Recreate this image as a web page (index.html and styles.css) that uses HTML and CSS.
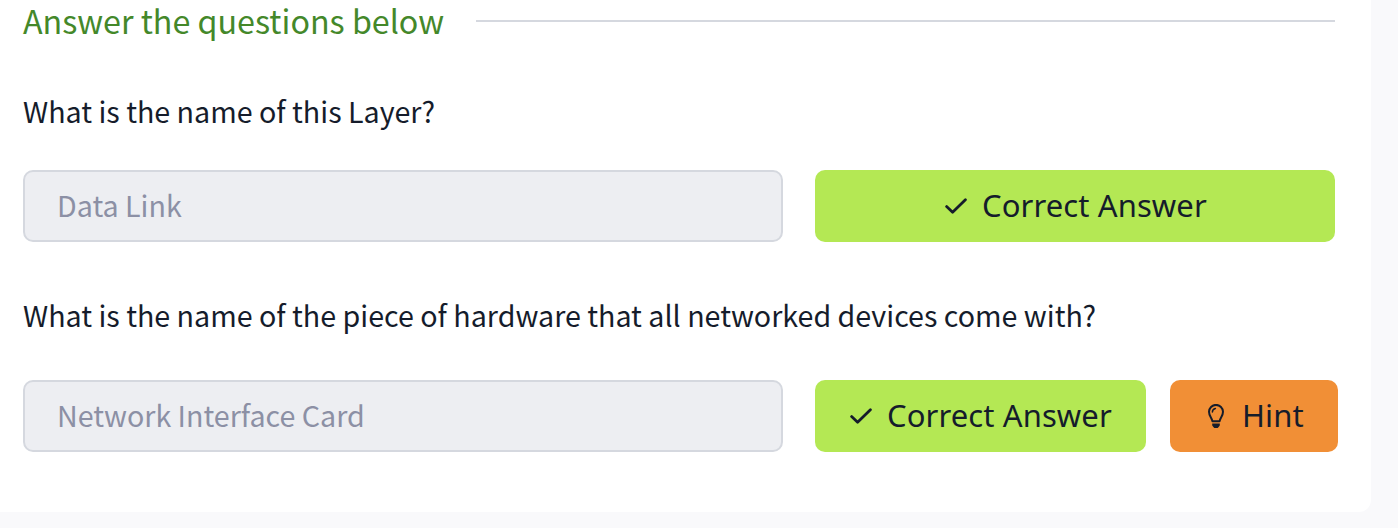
FILE: index.html
```html
<!DOCTYPE html>
<html lang="en">
<head>
<meta charset="utf-8">
<title>Questions</title>
<link rel="stylesheet" href="styles.css">
</head>
<body>
<main class="card">
  <header class="heading">
    <h2 class="title">Answer the questions below</h2>
    <span class="rule"></span>
  </header>
  <section class="task">
    <p class="question">What is the name of this Layer?</p>
    <div class="row">
      <div class="field"><span class="value">Data Link</span></div>
      <button class="btn correct wide">
        <svg class="check" viewBox="0 0 22 16"><path d="M1.6 8.6 7.6 14.2 20.4 1.8"/></svg>
        <span class="label">Correct Answer</span>
      </button>
    </div>
  </section>
  <section class="task second">
    <p class="question">What is the name of the piece of hardware that all networked devices come with?</p>
    <div class="row">
      <div class="field"><span class="value">Network Interface Card</span></div>
      <button class="btn correct narrow">
        <svg class="check" viewBox="0 0 22 16"><path d="M1.6 8.6 7.6 14.2 20.4 1.8"/></svg>
        <span class="label">Correct Answer</span>
      </button>
      <button class="btn hint">
        <svg class="bulb" viewBox="0 0 16 24"><path class="line" d="M4.4 17.2C4 14 1 12.2 1 7.8a7 6.9 0 0 1 14 0c0 4.4-3 6.2-3.4 9.4z"/><path class="line thin" d="M4.4 8Q4.4 5 7.4 4.4"/><path class="base" d="M4.2 19.4h7.6v1.7q0 .7-.6 1.2l-1 1.1q-.5.6-1.2.6H7q-.7 0-1.2-.6l-1-1.1q-.6-.5-.6-1.2z"/></svg>
        <span class="label">Hint</span>
      </button>
    </div>
  </section>
</main>
</body>
</html>
```
FILE: styles.css
```css
body {
  margin: 0;
  background: #f9f9fb;
  color: #151c2b;
  font-family: "Noto Sans CJK JP", "Noto Sans", sans-serif;
}
.card {
  box-sizing: border-box;
  width: 1371px;
  height: 512px;
  padding-left: 23px;
  background: #fff;
  border-radius: 0 0 12px 0;
}
.heading {
  display: flex;
  align-items: center;
  gap: 30px;
  width: 1312px;
  height: 42px;
}
.title {
  flex: none;
  width: 423px;
  margin: 0;
  padding-bottom: 2px;
  color: #44882a;
  font-size: 32.25px;
  font-weight: 400;
  line-height: 40px;
  white-space: nowrap;
}
.rule {
  flex: 1;
  height: 2px;
  background: #d5d8df;
}
.task {
  padding-top: 45px;
}
.second {
  padding-top: 49px;
}
.question {
  height: 48px;
  margin: 0 0 35px;
  font-size: 28.65px;
  line-height: 48px;
  white-space: nowrap;
}
.second .question {
  margin-bottom: 41px;
}
.row {
  display: flex;
}
.field {
  display: flex;
  align-items: center;
  box-sizing: border-box;
  width: 760px;
  height: 72px;
  margin-right: 32px;
  padding: 0 0 2px 32px;
  border: 2px solid #d5d8df;
  border-radius: 10px;
  background: #edeef2;
}
.value {
  color: #8c90a5;
  font-size: 28.65px;
  line-height: 48px;
  white-space: nowrap;
}
.btn {
  display: flex;
  align-items: center;
  justify-content: flex-start;
  box-sizing: border-box;
  height: 72px;
  padding: 0;
  border: 0;
  border-radius: 10px;
  color: #151c2b;
  font-family: "Noto Sans", sans-serif;
  font-size: 31px;
  letter-spacing: 0.1px;
}
.correct {
  background: #b4e854;
}
.wide {
  width: 520px;
  padding-left: 130px;
}
.narrow {
  width: 331px;
  padding-left: 35px;
}
.hint {
  width: 168px;
  margin-left: 24px;
  padding-left: 38px;
  background: #f18f36;
}
.label {
  padding-bottom: 2px;
  line-height: 40px;
  white-space: nowrap;
}
.check {
  flex: none;
  width: 22px;
  height: 16px;
  margin-right: 15px;
  fill: none;
  stroke: #151c2b;
  stroke-width: 2.8;
  stroke-linecap: round;
  stroke-linejoin: round;
}
.bulb {
  flex: none;
  width: 16px;
  height: 24px;
  margin-right: 18px;
}
.line {
  fill: none;
  stroke: #151c2b;
  stroke-width: 2;
  stroke-linejoin: round;
  stroke-linecap: round;
}
.thin {
  stroke-width: 1.5;
}
.base {
  fill: #151c2b;
}
```
